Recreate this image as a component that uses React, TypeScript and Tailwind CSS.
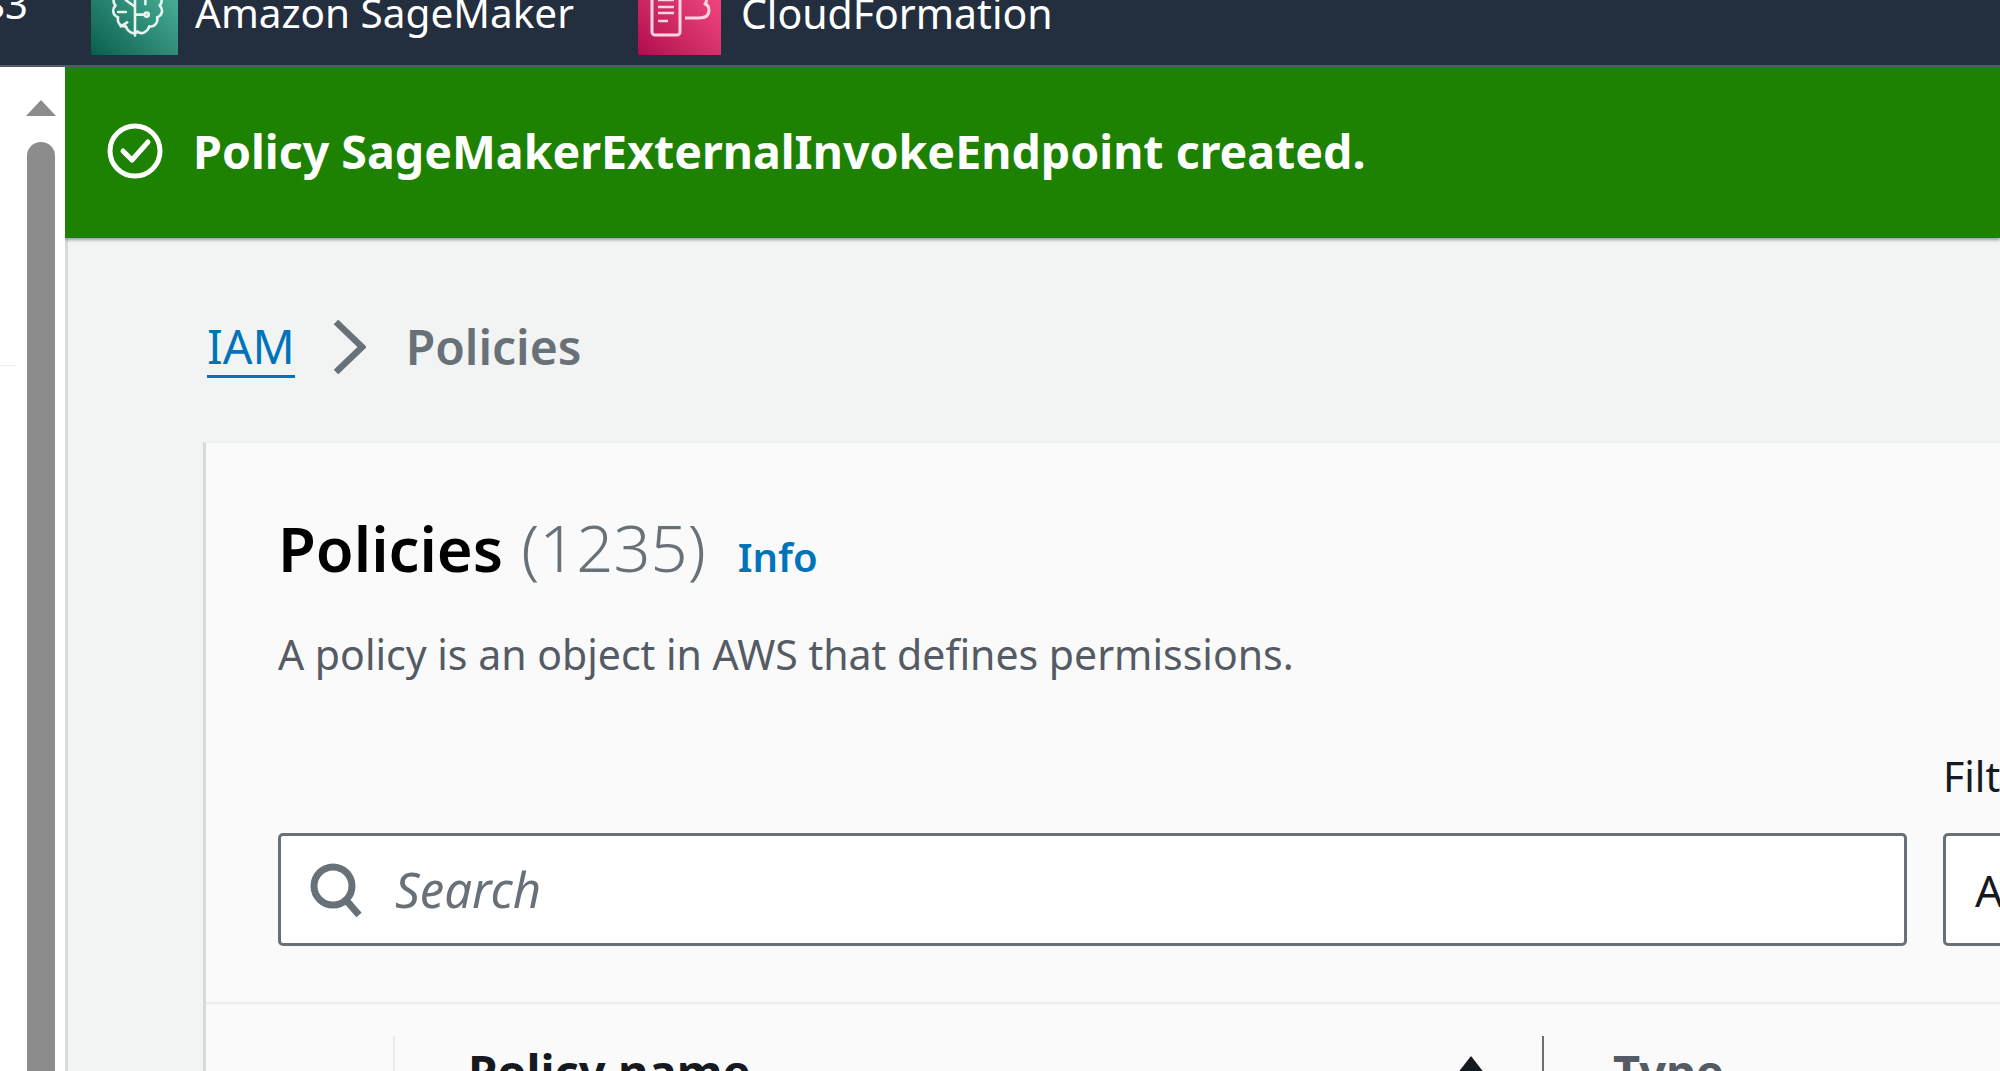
const sans = 'font-["Noto_Sans","Open_Sans",sans-serif]'

function SageMakerIcon() {
  return (
    <div className="w-[87px] h-[87px] shrink-0 bg-gradient-to-tr from-[#055f4e] to-[#56c0a7] flex items-center justify-center">
      <svg viewBox="0 0 60 60" className="w-[78px] h-[78px] shrink-0" fill="none" stroke="#e6f5f0" strokeWidth="2" strokeLinecap="round" strokeLinejoin="round">
        <path d="M30 8c3-3 8-2 9 2 4-1 8 2 7 6 4 1 6 6 3 9 3 3 2 8-2 9 1 4-2 8-6 7-1 4-6 7-9 4-3 3-8 0-9-4-4 1-7-3-6-7-4-1-5-6-2-9-3-3-1-8 3-9-1-4 3-7 7-6 1-4 5-5 5-2z" />
        <path d="M30 20v28M30 32h8M30 26l-7-5M23 30h-6M38 24v-6M24 38l-5 3" />
        <circle cx="39" cy="32" r="1.6" />
      </svg>
    </div>
  )
}

function CloudFormationIcon() {
  return (
    <div className="w-[83px] h-[87px] shrink-0 ml-[64px] bg-gradient-to-tr from-[#b0084d] to-[#ff4f8b]">
      <svg viewBox="0 0 83 87" className="w-full h-full" fill="none" stroke="#fbd3e2" strokeWidth="3" strokeLinejoin="round">
        <path d="M14 12h28v52a3 3 0 0 1-3 3H17a3 3 0 0 1-3-3z" />
        <path d="M20 32h16M20 39h16M20 45h16M20 53h10" strokeWidth="2.6" />
        <path d="M47 50h14c7 0 10-3 10-8 0-3-1-5-4-6 2-2 2-6 0-9" />
      </svg>
    </div>
  )
}

export default function App() {
  return (
    <div className={`w-[2000px] h-[1071px] overflow-hidden flex flex-col bg-white ${sans}`}>
      {/* top nav, cut off by the screenshot */}
      <div className="h-[67px] shrink-0 bg-[#232f3e] border-b-2 border-[#545b64] flex items-end overflow-hidden pb-[10px] relative text-white">
        <span className="absolute left-[-17px] top-[-23px] text-[40px] leading-[54px]">S3</span>
        <div className="ml-[91px] flex items-end">
          <SageMakerIcon />
          <span className="ml-[17px] text-[40.5px] leading-[54px] mb-[15px] whitespace-nowrap">Amazon SageMaker</span>
        </div>
        <CloudFormationIcon />
        <span className="ml-[20px] text-[41px] leading-[54px] mb-[15px] whitespace-nowrap">CloudFormation</span>
      </div>

      <div className="flex flex-1 min-h-0">
        {/* browser scrollbar + collapsed side panel */}
        <div className="w-[65px] shrink-0 bg-white relative flex flex-col items-start">
          <div className="ml-[26px] mt-[33px] w-0 h-0 border-l-[15px] border-r-[15px] border-b-[16px] border-l-transparent border-r-transparent border-b-[#8c8c8c]" />
          <div className="ml-[27px] mt-[26px] w-[28px] flex-1 bg-[#8c8c8c] rounded-t-[14px]" />
          <div className="absolute left-0 top-[298px] w-[17px] h-[1px] bg-[#eaeded]" />
        </div>

        <div className="flex-1 min-w-0 flex flex-col overflow-hidden">
          {/* success banner */}
          <div className="h-[171px] shrink-0 bg-[#1d8102] shadow-[0_2px_3px_rgba(0,0,0,0.35)] relative flex items-center pl-[42px] pb-[3px] text-white">
            <svg viewBox="0 0 56 56" className="w-[56px] h-[56px] shrink-0" fill="none" stroke="#fff" strokeWidth="5">
              <circle cx="28" cy="28" r="25" />
              <path d="M16 28l9 9 16-18" strokeLinecap="round" strokeLinejoin="round" />
            </svg>
            <span className="ml-[30px] text-[46.5px] font-bold leading-[60px] whitespace-nowrap">Policy SageMakerExternalInvokeEndpoint created.</span>
          </div>

          <div className="flex-1 min-h-0 flex flex-col bg-[#f2f3f3] border-l-[3px] border-[#d5dbdb]">
            {/* breadcrumb */}
            <div className="mt-[79px] ml-[139px] h-[60px] shrink-0 flex items-center text-[46.5px] leading-[60px]">
              <span className="text-[#0073bb] border-b-[3px] border-[#0073bb] leading-[58px]">IAM</span>
              <svg viewBox="0 0 33 54" className="w-[33px] h-[54px] ml-[38px] shrink-0" fill="none" stroke="#687078" strokeWidth="6.5">
                <path d="M3 2l26 25L3 52" />
              </svg>
              <span className="ml-[40px] text-[48px] text-[#687078] font-semibold">Policies</span>
            </div>

            {/* policies card */}
            <div className="mt-[65px] ml-[135px] flex-1 bg-[#fafafa] border-l-[3px] border-t-[1px] border-[#d5dbdb] border-t-[#eaeded] flex flex-col overflow-hidden">
              <div className="ml-[72px] mt-[64px] h-[80px] flex items-baseline whitespace-nowrap">
                <span className="text-[61.5px] leading-[80px] font-semibold text-black">Policies</span>
                <span className="ml-[18px] text-[65px] leading-[80px] font-light text-[#687078]">(1235)</span>
                <span className="ml-[32px] text-[40px] font-semibold text-[#0073bb]">Info</span>
              </div>
              <p className="ml-[72px] mt-[40px] text-[41px] leading-[54px] text-[#545b64] whitespace-nowrap">A policy is an object in AWS that defines permissions.</p>

              <div className="ml-[72px] mt-[68px] flex gap-[36px] items-end">
                <div className="w-[1629px] h-[113px] shrink-0 bg-white border-[3px] border-[#687078] rounded-[5px] flex items-center pl-[29px]">
                  <svg viewBox="0 0 52 54" className="w-[52px] h-[54px] shrink-0" fill="none" stroke="#687078" strokeWidth="7">
                    <circle cx="23" cy="23" r="19" />
                    <path d="M36 37l13 15" />
                  </svg>
                  <span className="ml-[33px] text-[49px] italic text-[#687078]">Search</span>
                </div>
                <div className="shrink-0 flex flex-col">
                  <span className="text-[41px] leading-[54px] mb-[30px] text-[#16191f]">Filter by Type</span>
                  <div className="w-[300px] h-[113px] bg-white border-[3px] border-[#687078] rounded-[5px] flex items-center pl-[29px] text-[44px] text-[#16191f]">All types</div>
                </div>
              </div>

              <div className="mt-[56px] h-[2px] shrink-0 bg-[#eaeded]" />

              {/* table header, runs off the bottom */}
              <div className="mt-[32px] flex items-start h-[60px]">
                <div className="ml-[187px] w-[2px] h-[60px] bg-[#eaeded]" />
                <div className="w-[1147px] h-[60px] relative pl-[73px] pt-[5px] text-[47px] leading-[60px] font-bold text-[#16191f]">
                  <span>Policy name</span>
                  <div className="absolute left-[1062px] top-[20px] w-0 h-0 border-l-[14px] border-r-[14px] border-b-[18px] border-l-transparent border-r-transparent border-b-[#16191f]" />
                </div>
                <div className="w-[2px] h-[60px] bg-[#687078]" />
                <div className="pl-[69px] pt-[5px] text-[47px] leading-[60px] font-bold text-[#545b64]">Type</div>
              </div>
            </div>
          </div>
        </div>
      </div>
    </div>
  )
}
